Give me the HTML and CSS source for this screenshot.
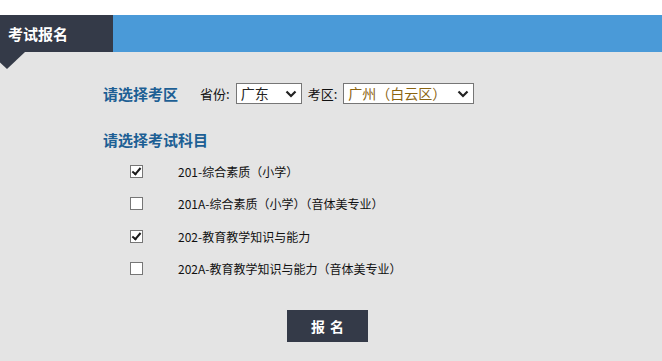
FILE: index.html
```html
<!DOCTYPE html>
<html lang="zh-CN">

<head>
    <meta charset="UTF-8">
    <meta name="viewport" content="width=device-width, initial-scale=1.0">
    <title>考试报名</title>
    <link rel="stylesheet" href="styles.css">
</head>

<body>
    <div class="page">
        <div class="header">
            <div class="header-tab">考试报名</div>
            <div class="header-bar"></div>
        </div>

        <div class="content">
            <div class="area-row">
                <span class="section-title">请选择考区</span>
                <label class="field-label">省份:</label>
                <select class="province">
                    <option>广东</option>
                </select>
                <label class="field-label">考区:</label>
                <select class="district">
                    <option>广州（白云区）</option>
                </select>
            </div>

            <div class="section-title subjects-title">请选择考试科目</div>

            <ul class="subject-list">
                <li><input type="checkbox" checked><span>201-综合素质（小学）</span></li>
                <li><input type="checkbox"><span>201A-综合素质（小学）（音体美专业）</span></li>
                <li><input type="checkbox" checked><span>202-教育教学知识与能力</span></li>
                <li><input type="checkbox"><span>202A-教育教学知识与能力（音体美专业）</span></li>
            </ul>

            <div class="actions">
                <button class="submit-btn">报名</button>
            </div>
        </div>
    </div>
</body>

</html>
```

FILE: styles.css
```css
body {
    font-family: "Noto Sans CJK SC", "Liberation Sans", sans-serif;
    margin: 0;
    padding: 0;
    background-color: white;
}

.page {
    margin-top: 15px;
    background-color: #e4e4e4;
    min-height: 346px;
}

.header {
    display: flex;
    height: 37px;
}

.header-tab {
    position: relative;
    width: 105px;
    padding-left: 8px;
    background-color: #343a48;
    color: white;
    font-size: 15px;
    font-weight: bold;
    line-height: 37px;
}

/* 标签下面的小三角 */
.header-tab::after {
    content: "";
    position: absolute;
    top: 100%;
    left: -11px;
    border-left: 18px solid transparent;
    border-right: 18px solid transparent;
    border-top: 17px solid #343a48;
}

.header-bar {
    flex: 1;
    background-color: #4a9ad8;
}

.content {
    padding: 31px 0 0 103px;
}

.area-row {
    display: flex;
    align-items: center;
    height: 21px;
}

.section-title {
    color: #1d5f94;
    font-size: 15px;
    font-weight: bold;
}

.field-label {
    font-size: 13px;
    color: #111;
    margin-right: 6px;
}

.area-row .section-title {
    margin-right: 22px;
}

select {
    appearance: none;
    height: 21px;
    font-family: inherit;
    font-size: 14px;
    line-height: 19px;
    border: 1px solid #767676;
    border-radius: 0;
    background-color: white;
    background-image: url("data:image/svg+xml,%3Csvg xmlns='http://www.w3.org/2000/svg' width='12' height='8' viewBox='0 0 12 8'%3E%3Cpath d='M1.5 1.5 L6 6 L10.5 1.5' fill='none' stroke='%23222' stroke-width='2.2'/%3E%3C/svg%3E");
    background-repeat: no-repeat;
    background-position: right 4px center;
    padding: 0 18px 0 4px;
}

.province {
    width: 66px;
    margin-right: 6px;
    color: #222;
}

.district {
    width: 131px;
    color: #8b6410;
}

.subjects-title {
    margin-top: 24px;
    line-height: 24px;
}

.subject-list {
    list-style: none;
    margin: 3px 0 0 0;
    padding: 0;
}

.subject-list li {
    display: flex;
    align-items: center;
    height: 32.5px;
    font-size: 12px;
    color: #111;
}

.subject-list input {
    appearance: none;
    position: relative;
    width: 13px;
    height: 13px;
    margin: 0 35px 0 27px;
    border: 1px solid #767676;
    background-color: white;
}

/* 勾选标记 */
.subject-list input:checked::after {
    content: "";
    position: absolute;
    left: 3px;
    top: 0px;
    width: 3px;
    height: 7px;
    border-right: 2px solid #1a1a1a;
    border-bottom: 2px solid #1a1a1a;
    transform: rotate(40deg);
}

.actions {
    padding: 25px 0 0 184px;
}

.submit-btn {
    width: 81px;
    height: 32px;
    border: none;
    padding: 0 0 0 5px;
    background-color: #343a48;
    color: white;
    font-family: inherit;
    font-size: 14px;
    font-weight: bold;
    letter-spacing: 5px;
}
```
